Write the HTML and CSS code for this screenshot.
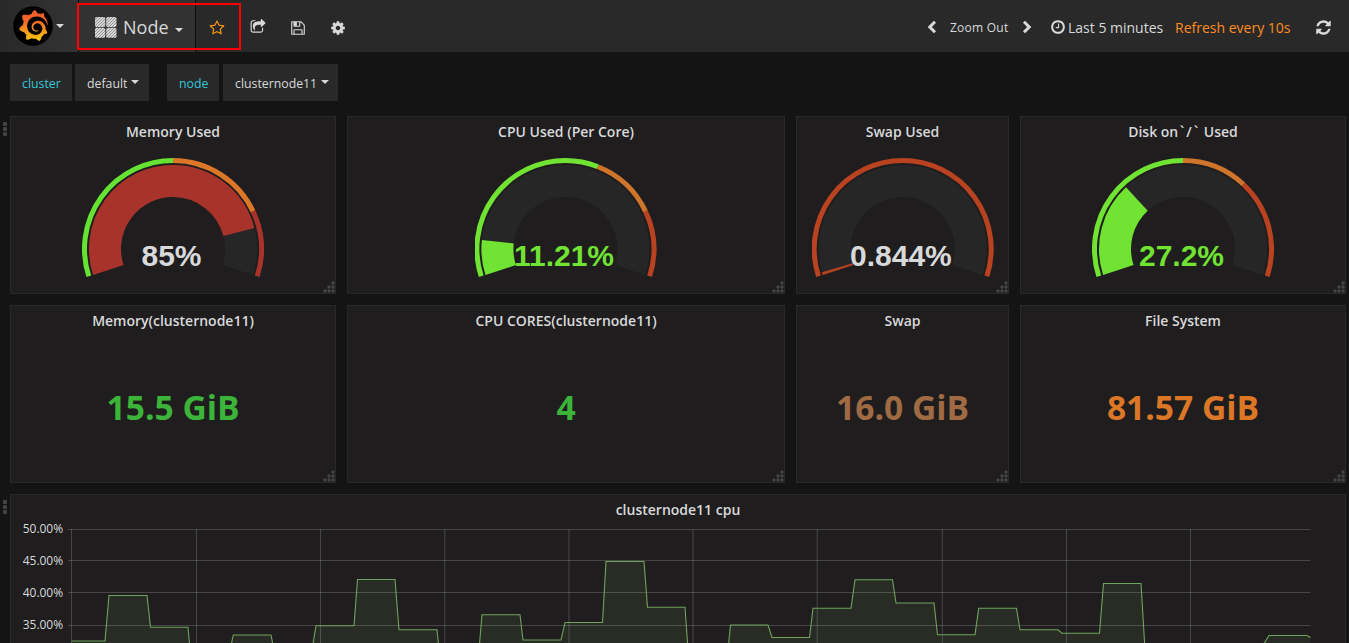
FILE: index.html
```html
<!DOCTYPE html>
<html lang="en">
<head>
<meta charset="utf-8">
<title>Node</title>
<link rel="stylesheet" href="styles.css">
</head>
<body>
<svg class="defs" width="0" height="0" aria-hidden="true">
  <defs>
    <linearGradient id="flame" x1="0" y1="0" x2="0" y2="1"><stop offset="0" stop-color="#f05a28"/><stop offset="0.35" stop-color="#f1662a"/><stop offset="1" stop-color="#fbca0a"/></linearGradient>
    <pattern id="hatch" width="3" height="3" patternUnits="userSpaceOnUse"><rect width="3" height="3" fill="#d6d6d6"/><path d="M-1 1L1 -1M0 3L3 0M2 4L4 2" stroke="#8c8c8c" stroke-width="0.9"/></pattern>
    <symbol id="grip" viewBox="0 0 12 12"><g fill="#464646"><circle cx="10" cy="2" r="1.7"/><circle cx="6" cy="6" r="1.7"/><circle cx="10" cy="6" r="1.7"/><circle cx="2" cy="10" r="1.7"/><circle cx="6" cy="10" r="1.7"/><circle cx="10" cy="10" r="1.7"/></g></symbol>
    <path id="ring" d="M6.83 118.35A88.5 88.5 0 1 1 175.17 118.35" pathLength="100"/>
    <path id="band" d="M26.33 112.01A68 68 0 1 1 155.67 112.01" pathLength="100"/>
  </defs>
</svg>

<header class="navbar">
  <div class="brand">
    <svg class="logo" viewBox="0 0 40 40"><circle cx="20" cy="20" r="19.8" fill="#000"/><g transform="translate(4.9 4) scale(1.29)"><path fill="url(#flame)" d="M23.02 10.59a8.578 8.578 0 0 0-.862-3.034 8.911 8.911 0 0 0-1.789-2.445c.337-1.342-.413-2.505-.413-2.505-1.292-.08-2.113.4-2.416.62-.052-.02-.102-.044-.154-.064-.22-.089-.446-.172-.677-.247-.231-.073-.47-.14-.711-.197a9.867 9.867 0 0 0-.875-.161C14.557.753 12.94 0 12.94 0c-1.804 1.145-2.147 2.744-2.147 2.744l-.018.093c-.098.029-.2.057-.298.088-.138.042-.275.094-.413.143-.138.055-.275.107-.41.166a8.869 8.869 0 0 0-1.557.87l-.063-.029c-2.497-.955-4.716.195-4.716.195-.203 2.658.996 4.33 1.235 4.636a11.608 11.608 0 0 0-.607 2.635C1.636 12.677.953 15.014.953 15.014c1.926 2.214 4.171 2.351 4.171 2.351.003-.002.006-.002.006-.005.285.509.615.994.986 1.446.156.19.32.371.488.548-.704 2.009.099 3.68.099 3.68 2.144.08 3.553-.937 3.849-1.173a9.784 9.784 0 0 0 3.164.501h.08l.055-.003.107-.002.103-.005.003.002c1.01 1.44 2.788 1.646 2.788 1.646 1.264-1.332 1.337-2.653 1.337-2.94v-.058c0-.02-.003-.039-.003-.06.265-.187.52-.387.758-.6a7.875 7.875 0 0 0 1.415-1.7c1.43.083 2.437-.885 2.437-.885-.236-1.49-1.085-2.216-1.264-2.354l-.018-.013-.016-.013a.217.217 0 0 1-.031-.02c.008-.092.016-.18.02-.27.011-.162.016-.323.016-.48v-.253l-.005-.098-.008-.135a1.891 1.891 0 0 0-.01-.13c-.003-.042-.008-.083-.013-.125l-.016-.124-.018-.122a6.215 6.215 0 0 0-2.032-3.73 6.015 6.015 0 0 0-3.222-1.46 6.292 6.292 0 0 0-.85-.048l-.107.002h-.063l-.044.003-.104.008a4.777 4.777 0 0 0-3.335 1.695c-.332.4-.592.84-.768 1.297a4.594 4.594 0 0 0-.312 1.817l.003.091c.005.055.007.11.013.164a3.615 3.615 0 0 0 .698 1.82 3.53 3.53 0 0 0 1.827 1.282c.33.098.66.14.971.137.039 0 .078 0 .114-.002l.063-.003c.02 0 .041-.003.062-.003.034-.002.065-.007.099-.01.007 0 .018-.003.028-.003l.031-.005.06-.008a1.18 1.18 0 0 0 .112-.02c.036-.008.072-.013.109-.024a2.634 2.634 0 0 0 .914-.415c.028-.02.056-.041.085-.065a.248.248 0 0 0 .039-.35.244.244 0 0 0-.309-.06l-.078.042c-.09.044-.184.083-.283.116a2.476 2.476 0 0 1-.475.096c-.028.003-.054.006-.083.006l-.083.002c-.026 0-.054 0-.08-.002l-.102-.006h-.012l-.024.006c-.016-.003-.031-.003-.044-.006-.031-.002-.06-.007-.091-.01a2.59 2.59 0 0 1-.724-.213 2.557 2.557 0 0 1-.667-.438 2.52 2.52 0 0 1-.805-1.475 2.306 2.306 0 0 1-.029-.444l.006-.122v-.023l.002-.031c.003-.021.003-.04.005-.06a3.163 3.163 0 0 1 1.352-2.29 3.12 3.12 0 0 1 .937-.43 2.946 2.946 0 0 1 .776-.101h.06l.07.002.045.003h.026l.07.005a4.041 4.041 0 0 1 1.635.49 3.94 3.94 0 0 1 1.602 1.662 3.77 3.77 0 0 1 .397 1.414l.005.076.003.075c.002.026.002.05.002.075 0 .024.003.052 0 .07v.065l-.002.073-.008.174a6.195 6.195 0 0 1-.08.639 5.1 5.1 0 0 1-.267.927 5.31 5.31 0 0 1-.624 1.13 5.052 5.052 0 0 1-3.237 2.014 4.82 4.82 0 0 1-.649.066l-.039.003h-.287a6.607 6.607 0 0 1-1.716-.265 6.776 6.776 0 0 1-3.4-2.274 6.75 6.75 0 0 1-.746-1.15 6.616 6.616 0 0 1-.714-2.596l-.005-.083-.002-.02v-.056l-.003-.073v-.096l-.003-.104v-.07l.003-.163c.008-.22.026-.45.054-.678a8.707 8.707 0 0 1 .28-1.355c.128-.444.286-.872.473-1.277a7.04 7.04 0 0 1 1.456-2.1 5.925 5.925 0 0 1 .953-.763c.169-.111.343-.213.524-.306.089-.05.182-.091.273-.135.047-.02.093-.042.138-.062a7.177 7.177 0 0 1 .714-.267l.145-.045c.049-.015.098-.026.148-.041.098-.029.197-.052.296-.076.049-.013.1-.02.15-.033l.15-.032.151-.028.076-.013.075-.01.153-.024c.057-.01.114-.013.171-.023l.169-.021c.036-.003.073-.008.106-.01l.073-.008.036-.003.042-.002c.057-.003.114-.008.171-.01l.086-.006h.023l.037-.003.145-.007a7.999 7.999 0 0 1 1.708.125 7.917 7.917 0 0 1 2.048.68 8.253 8.253 0 0 1 1.672 1.09l.09.077.089.078c.06.052.114.107.171.159.057.052.112.106.166.16.052.055.107.107.159.164a8.671 8.671 0 0 1 1.41 1.978c.012.026.028.052.04.078l.04.078.075.156c.023.051.049.1.07.153l.065.15a8.848 8.848 0 0 1 .45 1.34.19.19 0 0 0 .201.142.186.186 0 0 0 .172-.184c.01-.246.002-.532-.024-.856z"/></g></svg>
    <span class="caret"></span>
  </div>
  <div class="dash-title">
    <svg class="grid-icon" viewBox="0 0 22 21"><g fill="url(#hatch)"><rect width="10.3" height="10" rx="1.6"/><rect x="11.2" width="10.3" height="10" rx="1.6"/><rect y="10.8" width="10.3" height="10" rx="1.6"/><rect x="11.2" y="10.8" width="10.3" height="10" rx="1.6"/></g></svg>
    <span class="dash-name">Node</span>
    <span class="caret"></span>
  </div>
  <nav class="actions">
    <svg class="icon star" viewBox="-64 0 1792 1792"><path d="M1137 1004l306-297-422-62-189-382-189 382-422 62 306 297-73 421 378-199 377 199zm527-357q0 22-26 48l-363 354 86 500q1 7 1 20 0 50-41 50-19 0-40-12l-449-236-449 236q-22 12-40 12-21 0-31.500-14.500t-10.500-35.500q0-6 2-20l86-500-364-354q-25-27-25-48 0-37 56-46l502-73 225-455q19-41 49-41t49 41l225 455 502 73q56 9 56 46z"/></svg>
    <svg class="icon share" viewBox="0 0 1792 1792"><path d="M1472 989v259q0 119-84.500 203.500t-203.500 84.500h-832q-119 0-203.500-84.500t-84.500-203.500v-832q0-119 84.500-203.500t203.500-84.500h255q13 0 22.500 9.500t9.500 22.500q0 27-26 32-77 26-133 60-10 4-16 4h-112q-66 0-113 47t-47 113v832q0 66 47 113t113 47h832q66 0 113-47t47-113v-214q0-19 18-29 28-13 54-37 16-16 35-8 21 9 21 29zm237-496l-384 384q-18 19-45 19-12 0-25-5-39-17-39-59v-192h-160q-323 0-438 131-119 137-74 473 3 23-20 34-8 2-12 2-16 0-26-13-10-14-21-31t-39.500-68.500-49.500-99.500-38.500-114-17.500-122q0-49 3.500-91t14-90 28-88 47-81.500 68.500-74 94.500-61.500 124.500-48.500 159.500-30.500 196.500-11h160v-192q0-42 39-59 13-5 25-5 26 0 45 19l384 384q19 19 19 45t-19 45z"/></svg>
    <svg class="icon save" viewBox="0 0 1792 1792"><path d="M512 1536h768v-384h-768v384zm896 0h128v-896q0-14-10-38.500t-20-34.500l-281-281q-10-10-34-20t-39-10v416q0 40-28 68t-68 28h-576q-40 0-68-28t-28-68v-416h-128v1280h128v-416q0-40 28-68t68-28h832q40 0 68 28t28 68v416zm-384-928v-320q0-13-9.500-22.500t-22.500-9.500h-192q-13 0-22.500 9.500t-9.500 22.500v320q0 13 9.500 22.500t22.500 9.500h192q13 0 22.500-9.500t9.500-22.500zm640 32v928q0 40-28 68t-68 28h-1344q-40 0-68-28t-28-68v-1344q0-40 28-68t68-28h928q40 0 88 20t76 48l280 280q28 28 48 76t20 88z"/></svg>
    <svg class="icon" viewBox="0 0 1792 1792"><path d="M1152 896q0-106-75-181t-181-75-181 75-75 181 75 181 181 75 181-75 75-181zm512-109v222q0 12-8 23t-20 13l-185 28q-19 54-39 91 35 50 107 138 10 12 10 25t-9 23q-27 37-99 108t-94 71q-12 0-26-9l-138-108q-44 23-91 38-16 136-29 186-7 28-36 28h-222q-14 0-24.500-8.500t-11.500-21.500l-28-184q-49-16-90-37l-141 107q-10 9-25 9-14 0-25-11-126-114-165-168-7-10-7-23 0-12 8-23 15-21 51-66.500t54-70.500q-27-50-41-99l-183-27q-13-2-21-12.500t-8-23.500v-222q0-12 8-23t19-13l186-28q14-46 39-92-40-57-107-138-10-12-10-24 0-10 9-23 26-36 98.500-107.500t94.500-71.500q13 0 26 10l138 107q44-23 91-38 16-136 29-186 7-28 36-28h222q14 0 24.500 8.500t11.500 21.500l28 184q49 16 90 37l142-107q9-9 24-9 13 0 25 10 129 119 165 170 7 8 7 22 0 12-8 23-15 21-51 66.500t-54 70.500q26 50 41 98l183 28q13 2 21 12.500t8 23.500z"/></svg>
  </nav>
  <div class="time-nav">
    <svg class="chevron" viewBox="0 0 10 14"><path d="M8 1.800L2.800 7L8 12.200"/></svg>
    <span class="zoom-out">Zoom Out</span>
    <svg class="chevron" viewBox="0 0 10 14"><path d="M2 1.800L7.200 7L2 12.200"/></svg>
    <svg class="icon clock" viewBox="0 0 1792 1792"><path d="M1024 544v448q0 14-9 23t-23 9h-320q-14 0-23-9t-9-23v-64q0-14 9-23t23-9h224v-352q0-14 9-23t23-9h64q14 0 23 9t9 23zm416 352q0-148-73-273t-198-198-273-73-273 73-198 198-73 273 73 273 198 198 273 73 273-73 198-198 73-273zm224 0q0 209-103 385.500t-279.500 279.500-385.500 103-385.500-103-279.500-279.500-103-385.500 103-385.500 279.500-279.500 385.500-103 385.500 103 279.500 279.500 103 385.500z"/></svg>
    <span class="range">Last 5 minutes</span>
    <span class="refresh-rate">Refresh every 10s</span>
    <svg class="icon refresh" viewBox="0 0 1792 1792"><path d="M1639 1056q0 5-1 7-64 268-268 434.500t-478 166.500q-146 0-282.500-55t-243.500-157l-129 129q-19 19-45 19t-45-19-19-45v-448q0-26 19-45t45-19h448q26 0 45 19t19 45-19 45l-137 137q71 66 161 102t187 36q134 0 250-65t186-179q11-17 53-117 8-23 30-23h192q13 0 22.500 9.500t9.500 22.500zm25-800v448q0 26-19 45t-45 19h-448q-26 0-45-19t-19-45 19-45l138-138q-148-137-349-137-134 0-250 65t-186 179q-11 17-53 117-8 23-30 23h-199q-13 0-22.500-9.500t-9.500-22.500v-7q65-268 270-434.500t480-166.500q146 0 284 55.500t245 156.500l130-129q19-19 45-19t45 19 19 45z"/></svg>
  </div>
  <div class="highlight"></div>
</header>

<div class="filters">
  <span class="filter-label w-cluster">cluster</span>
  <span class="filter-value w-default">default<i class="caret"></i></span>
  <span class="filter-label w-node">node</span>
  <span class="filter-value w-host">clusternode11<i class="caret"></i></span>
</div>

<main class="dashboard">
  <div class="row">
    <div class="row-handle"><i></i><i></i><i></i></div>
    <section class="panel">
      <h2>Memory Used</h2>
      <svg class="gauge" viewBox="0 0 182 120"><use href="#ring" class="ring green" stroke-dasharray="50 100"/><use href="#ring" class="ring orange" stroke-dasharray="0 50 30 100"/><use href="#ring" class="ring crimson" stroke-dasharray="0 80 20 100"/><use href="#band" class="band track"/><use href="#band" class="band crimson" stroke-dasharray="85 100"/><text x="89.500" y="107.500" class="plain">85%</text></svg>
      <svg class="grip"><use href="#grip"/></svg>
    </section>
    <section class="panel">
      <h2>CPU Used (Per Core)</h2>
      <svg class="gauge" viewBox="0.600 0 182 120"><use href="#ring" class="ring lime" stroke-dasharray="60 100"/><use href="#ring" class="ring amber" stroke-dasharray="0 60 20 100"/><use href="#ring" class="ring red" stroke-dasharray="0 80 20 100"/><use href="#band" class="band track"/><use href="#band" class="band lime" stroke-dasharray="11.210 100"/><text x="89.600" y="107.500" class="good">11.21%</text></svg>
      <svg class="grip"><use href="#grip"/></svg>
    </section>
    <section class="panel">
      <h2>Swap Used</h2>
      <svg class="gauge" viewBox="0.300 0 182 120"><use href="#ring" class="ring red"/><use href="#band" class="band track"/><use href="#band" class="band red" stroke-dasharray="0.950 100"/><text x="89.200" y="107.500" class="plain">0.844%</text></svg>
      <svg class="grip"><use href="#grip"/></svg>
    </section>
    <section class="panel">
      <h2>Disk on<span class="mount">`/`</span> Used</h2>
      <svg class="gauge" viewBox="0 0 182 120"><use href="#ring" class="ring lime" stroke-dasharray="50 100"/><use href="#ring" class="ring amber" stroke-dasharray="0 50 20 100"/><use href="#ring" class="ring red" stroke-dasharray="0 70 30 100"/><use href="#band" class="band track"/><use href="#band" class="band lime" stroke-dasharray="30.200 100"/><text x="89.500" y="107.500" class="good">27.2%</text></svg>
      <svg class="grip"><use href="#grip"/></svg>
    </section>
  </div>

  <div class="row">
    <section class="panel"><h2>Memory(clusternode11)</h2><div class="stat stat-green">15.5 GiB</div><svg class="grip"><use href="#grip"/></svg></section>
    <section class="panel"><h2>CPU CORES(clusternode11)</h2><div class="stat stat-green">4</div><svg class="grip"><use href="#grip"/></svg></section>
    <section class="panel"><h2>Swap</h2><div class="stat stat-brown">16.0 GiB</div><svg class="grip"><use href="#grip"/></svg></section>
    <section class="panel"><h2>File System</h2><div class="stat stat-orange">81.57 GiB</div><svg class="grip"><use href="#grip"/></svg></section>
  </div>

  <div class="row chart-row">
    <div class="row-handle"><i></i><i></i><i></i></div>
    <section class="panel">
      <h2>clusternode11 cpu</h2>
      <div class="chart">
        <div class="y-axis"><span>50.00%</span><span>45.00%</span><span>40.00%</span><span>35.00%</span></div>
        <svg class="plot" viewBox="68 520 1243 123">
          <path class="area" d="M71.500 641H105L109 595.500H147L150.500 627.300H188L190 650H230L233.300 635H271L274 650H312L316 625.700H354L357.500 579.500H395L399 629.700H437L439 650H479L482 614.700H520L523 640H561L565 622.500H602.500L606 561.500H644L647.500 607.300H685L688 650H728L730.500 625H768L772 637.500H809.500L813 608.300H851L855 579.700H892.500L896 603H934L937.500 634.700H975L978.700 608.300H1016.500L1020 629.800H1058L1062 633.200H1099.500L1103.500 583.500H1141L1145 650H1260L1269 635.500H1307L1310.500 637.500V650H71.500Z"/>
          <path class="grid" d="M68 529.500H1310.500M68 560.500H1310.500M68 592.500H1310.500M68 625.500H1310.500M71.500 529V643M196.500 529V643M320.500 529V643M444.800 529V643M569 529V643M693 529V643M817.200 529V643M942.300 529V643M1066.500 529V643M1190.500 529V643"/>
          <path class="line" d="M71.500 641H105L109 595.500H147L150.500 627.300H188L190 650H230L233.300 635H271L274 650H312L316 625.700H354L357.500 579.500H395L399 629.700H437L439 650H479L482 614.700H520L523 640H561L565 622.500H602.500L606 561.500H644L647.500 607.300H685L688 650H728L730.500 625H768L772 637.500H809.500L813 608.300H851L855 579.700H892.500L896 603H934L937.500 634.700H975L978.700 608.300H1016.500L1020 629.800H1058L1062 633.200H1099.500L1103.500 583.500H1141L1145 650H1260L1269 635.500H1307L1310.500 637.500"/>
        </svg>
      </div>
    </section>
  </div>
</main>
</body>
</html>
```
FILE: styles.css
```css
* { box-sizing: border-box; }

body {
  margin: 0;
  height: 643px;
  overflow: hidden;
  background: #141414;
  color: #d8d9da;
  font-family: "Open Sans", "Noto Sans", sans-serif;
  font-size: 13px;
}

.defs { position: absolute; }

.caret {
  display: inline-block;
  border: 4px solid transparent;
  border-top-color: currentColor;
  border-bottom: 0;
}

/* Top bar */
.navbar {
  position: relative;
  display: flex;
  height: 52px;
  background: #292929;
}

.brand {
  display: flex;
  align-items: center;
  gap: 3px;
  width: 78px;
  padding-left: 13px;
  background: linear-gradient(90deg, #292929, #333);
}
.logo { width: 40px; height: 40px; }

.dash-title {
  display: flex;
  align-items: center;
  width: 118px;
  padding: 3px 0 0 16px;
  border: solid #0a0a0a;
  border-width: 0 1px;
  background: #323232;
}
.grid-icon { width: 22px; height: 21px; }
.dash-name { margin: -1px 6px 1px 6px; font-size: 18px; line-height: 24px; }
.dash-title .caret { margin-top: 5px; }

.actions {
  display: flex;
  align-items: center;
  gap: 24px;
  padding: 3px 0 0 13px;
}
.icon { width: 16px; height: 16px; fill: #d8d9da; }
.star { fill: #ff9a15; margin-right: 1px; }
.share { margin-bottom: 1px; }

.time-nav {
  display: flex;
  align-items: center;
  margin-left: auto;
  padding: 2px 17px 0 0;
  white-space: nowrap;
}
.chevron { width: 10px; height: 14px; fill: none; stroke: #d8d9da; stroke-width: 3; }
.zoom-out { width: 58px; margin: 0 14px 0 13px; font-size: 12px; letter-spacing: 0.25px; }
.clock { margin-left: 18px; margin-right: 2px; }
.range { width: 96px; margin-right: 11px; font-size: 14px; }
.refresh-rate { width: 116px; font-size: 14px; color: #ff8d1f; }
.refresh { width: 17px; height: 17px; margin-left: 24px; }

.highlight {
  position: absolute;
  left: 77px;
  top: 3px;
  width: 164px;
  height: 47px;
  border: 2px solid #f00;
}

/* Template variables */
.filters {
  display: flex;
  height: 37px;
  margin: 12px 0 15px 10px;
}
.filter-label,
.filter-value {
  display: flex;
  align-items: center;
  height: 37px;
  padding: 1px 0 0 12px;
  background: #292929;
  font-size: 12.3px;
}
.filter-label { color: #33c7dc; }
.filter-value .caret { margin: 0 0 3px 4px; }
.w-cluster { width: 62px; margin-right: 3px; }
.w-default { width: 74px; margin-right: 18px; }
.w-node { width: 52px; margin-right: 4px; }
.w-host { width: 115px; }

/* Panels */
.dashboard { display: flex; flex-direction: column; gap: 11px; padding-left: 10px; }

.row {
  position: relative;
  display: grid;
  grid-template-columns: 326px 438px 213px 326px;
  column-gap: 11px;
  height: 178px;
}
.row-handle {
  position: absolute;
  left: -7px;
  top: 6px;
  display: flex;
  flex-direction: column;
  gap: 1px;
}
.row-handle i { width: 4px; height: 4px; border-radius: 1px; background: #444; }

.panel {
  position: relative;
  display: flex;
  flex-direction: column;
  align-items: center;
  border: 1px solid #292929;
  background: #1f1d1e;
}
.panel h2 {
  margin: 5px 0 0;
  font-size: 14px;
  font-weight: 600;
  line-height: 20px;
}
.mount { margin-left: 1.5px; letter-spacing: 2px; }
.grip { position: absolute; right: 0; bottom: 0; width: 12px; height: 12px; }

/* Gauges */
.gauge { width: 182px; height: 120px; margin-top: 16px; }
.ring { fill: none; stroke-width: 5; }
.band { fill: none; stroke-width: 32; }
.track { stroke: #262626; }
.green { stroke: #66e232; }
.lime { stroke: #70e333; }
.orange { stroke: #db7727; }
.amber { stroke: #cf742b; }
.crimson { stroke: #a8332b; }
.red { stroke: #b94220; }
.gauge text {
  font: bold 30px "Liberation Sans", Arial, sans-serif;
  text-anchor: middle;
}
.plain { fill: #d8d9da; }
.good { fill: #70e333; }

/* Single stats */
.stat {
  flex: 1;
  padding-top: 51px;
  font-size: 33.6px;
  font-weight: 700;
  line-height: 50px;
}
.stat-green { color: #3cb43a; }
.stat-brown { color: #a06b43; }
.stat-orange { color: #db7727; }

/* CPU graph */
.chart-row { grid-template-columns: 1336px; height: 149px; }
.chart-row .panel { align-items: stretch; border-bottom: 0; }
.chart-row h2 { text-align: center; }
.chart { display: flex; }
.y-axis {
  display: flex;
  flex-direction: column;
  width: 57px;
  padding-right: 5px;
  font-size: 12px;
  line-height: 32px;
  letter-spacing: -0.05px;
  text-align: right;
  margin-top: -7px;
}
.plot { width: 1243px; height: 123px; }
.grid { fill: none; stroke: rgba(200, 200, 200, 0.24); stroke-width: 1; }
.area { fill: rgba(126, 178, 109, 0.1); }
.line { fill: none; stroke: #6fa45c; stroke-width: 1.1; }
```
